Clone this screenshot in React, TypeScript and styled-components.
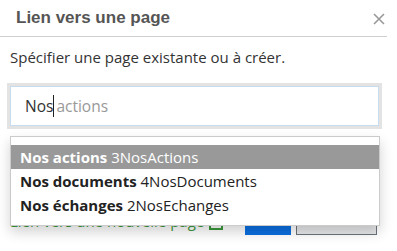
import styled, { createGlobalStyle } from 'styled-components';

const GlobalStyle = createGlobalStyle`
  html, body {
    margin: 0;
    padding: 0;
    background: #fff;
  }
  body {
    font-family: 'Open Sans', 'Noto Sans', sans-serif;
    color: #333;
  }
`;

const Modal = styled.div`
  position: relative;
  width: 387px;
  height: 251px;
  background: #fff;
`;

const Header = styled.div`
  display: flex;
  align-items: center;
  justify-content: space-between;
  height: 37px;
  padding: 0 2px 0 16px;
  box-sizing: border-box;
  border-bottom: 1px solid #cfcfcf;
`;

const Title = styled.h1`
  margin: 0;
  font-family: 'Liberation Sans', Arial, sans-serif;
  font-weight: bold;
  font-size: 17px;
  color: #555;
`;

const Close = styled.span`
  display: flex;
  width: 12px;
  height: 12px;
  margin-top: 1px;
`;

const Body = styled.div`
  padding: 10px 10px 0 7px;
`;

const Hint = styled.p`
  margin: 0 0 0 3px;
  font-size: 15px;
  line-height: 21px;
  color: #333;
`;

const InputFrame = styled.div`
  margin-top: 15px;
  width: 375px;
  border: 3px solid #e3e3e3;
  box-sizing: border-box;
`;

const Input = styled.div`
  display: flex;
  align-items: center;
  height: 38px;
  padding-left: 14px;
  border: 1px solid #c8dcf0;
  font-size: 15.5px;
`;

const Typed = styled.span`
  color: #333;
  border-right: 1px solid #222;
`;

const Placeholder = styled.span`
  color: #999;
  margin-left: 2px;
`;

const Footer = styled.div`
  display: flex;
  align-items: center;
  margin-top: 72px;
  padding-left: 3px;
`;

const NewLink = styled.a`
  display: flex;
  align-items: center;
  gap: 5px;
  margin-top: 6px;
  font-size: 15px;
  color: #3a9a3a;
  text-decoration: none;
`;

const NewIcon = styled.span`
  display: inline-block;
  width: 10px;
  height: 8px;
  margin-top: 5px;
  border: 2px solid #3a9a3a;
`;

const Buttons = styled.div`
  display: flex;
  gap: 5px;
  margin-left: auto;
`;

const PrimaryButton = styled.button`
  width: 46px;
  height: 34px;
  border: none;
  background: #0b6fe0;
`;

const SecondaryButton = styled.button`
  width: 81px;
  height: 34px;
  border: 1px solid #6c737b;
  background: #e6e7e9;
`;

const Dropdown = styled.ul`
  position: absolute;
  left: 10px;
  top: 136px;
  width: 370px;
  margin: 0;
  padding: 8px 0;
  box-sizing: border-box;
  list-style: none;
  background: #fff;
  border: 1px solid #cbcbcb;
  box-shadow: 0 6px 12px rgba(0, 0, 0, 0.18);
`;

const Option = styled.li<{ $active?: boolean }>`
  height: 24px;
  line-height: 24px;
  padding-left: 9px;
  font-size: 15px;
  color: ${(p) => (p.$active ? '#fff' : '#222')};
  background: ${(p) => (p.$active ? '#999' : 'transparent')};
  white-space: nowrap;

  b {
    font-weight: 700;
  }
`;

const options = [
  { title: 'Nos actions', slug: '3NosActions' },
  { title: 'Nos documents', slug: '4NosDocuments' },
  { title: 'Nos échanges', slug: '2NosEchanges' },
];

export default function App() {
  return (
    <>
      <GlobalStyle />
      <Modal>
        <Header>
          <Title>Lien vers une page</Title>
          <Close>
            <svg width="12" height="12" viewBox="0 0 12 12">
              <path d="M1 1L11 11M11 1L1 11" stroke="#999" strokeWidth="1.6" />
            </svg>
          </Close>
        </Header>
        <Body>
          <Hint>Spécifier une page existante ou à créer.</Hint>
          <InputFrame>
            <Input>
              <Typed>Nos</Typed>
              <Placeholder>actions</Placeholder>
            </Input>
          </InputFrame>
          <Footer>
            <NewLink href="#">
              Lien vers une nouvelle page <NewIcon />
            </NewLink>
            <Buttons>
              <PrimaryButton />
              <SecondaryButton />
            </Buttons>
          </Footer>
        </Body>
        <Dropdown>
          {options.map((o, i) => (
            <Option key={o.slug} $active={i === 0}>
              <b>{o.title}</b> {o.slug}
            </Option>
          ))}
        </Dropdown>
      </Modal>
    </>
  );
}
